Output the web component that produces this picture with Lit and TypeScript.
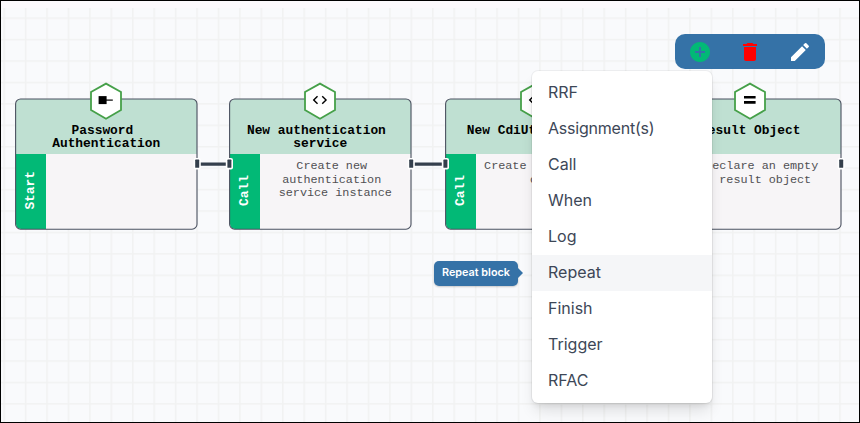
import { LitElement, html, svg, css } from "lit";
import { customElement, property } from "lit/decorators.js";
import { classMap } from "lit/directives/class-map.js";

type Glyph = "start" | "code" | "equal";

interface FlowNode {
  x: number;
  title: string;
  label: string;
  text: string;
  glyph: Glyph;
  input: boolean;
}

const NODES: FlowNode[] = [
  { x: 15, title: "Password \nAuthentication", label: "Start", text: "", glyph: "start", input: false },
  { x: 229, title: "New authentication \nservice", label: "Call", text: "Create new \nauthentication \nservice instance", glyph: "code", input: true },
  { x: 445, title: "New CdiUtil object", label: "Call", text: "Create new CdiUtil \nobject", glyph: "code", input: true },
  { x: 659, title: "Result Object", label: "Assign", text: "Declare an empty \nresult object", glyph: "equal", input: true },
];

const GLYPHS = {
  start: svg`<path d="M9.6 14.1h8v8h-8z"/><path d="M17 17.5h6.8v1.2H17z"/>`,
  code: svg`<path transform="translate(8.3 9.5) scale(.715)" d="M9.4 16.6 4.8 12l4.6-4.6L8 6l-6 6 6 6zm5.2 0 4.6-4.6-4.6-4.6L16 6l6 6-6 6z"/>`,
  equal: svg`<path d="M11 14h11.6v2.6H11zM11 19.1h11.6v2.6H11z"/>`,
};

const port = (cx: number) => svg`
  <rect x=${cx - 3.6} y="60" width="7.2" height="11.4" rx="2" fill="#fff"/>
  <rect x=${cx - 2} y="61.6" width="4" height="8.2" rx=".6" fill="#343f4c"/>
`;

@customElement("flow-node")
class FlowNodeElement extends LitElement {
  @property({ attribute: false }) node!: FlowNode;

  static styles = css`
    :host { display: block; font-family: "Liberation Mono", monospace; }
    .card {
      position: relative;
      box-sizing: border-box;
      width: 182.5px;
      height: 132px;
      padding: 1px;
      display: flex;
      flex-direction: column;
    }
    .head {
      flex: none;
      height: 54.5px;
      box-sizing: border-box;
      padding-top: 25px;
      background: #bfe0d2;
      border-radius: 5px 5px 0 0;
      text-align: center;
      white-space: pre;
      font-weight: 700;
      font-size: 12.86px;
      line-height: 13px;
      color: #000;
    }
    .body { flex: 1; display: flex; min-height: 0; background: #f7f5f7; border-radius: 0 0 5px 5px; }
    .side {
      flex: none;
      width: 30px;
      box-sizing: border-box;
      padding-bottom: 2px;
      background: #02b976;
      border-radius: 0 0 0 5px;
      display: flex;
      align-items: center;
      justify-content: center;
    }
    .label {
      writing-mode: vertical-rl;
      transform: rotate(180deg);
      color: #fff;
      font-weight: 700;
      font-size: 12.86px;
      line-height: 14px;
    }
    .text {
      flex: 1;
      padding-top: 6.5px;
      text-align: center;
      white-space: pre;
      font-size: 11.79px;
      line-height: 13.5px;
      color: #505053;
    }
    .frame { position: absolute; left: 0; top: 0; width: 183px; height: 132px; overflow: visible; }
    .hex { position: absolute; left: 74px; top: -16px; width: 34px; height: 38px; }
  `;

  render() {
    const n = this.node;
    return html`
      <div class="card">
        <div class="head">${n.title}</div>
        <div class="body">
          <div class="side"><span class="label">${n.label}</span></div>
          <div class="text">${n.text}</div>
        </div>
        <svg class="frame">
          <rect x=".6" y="1" width="181.4" height="130.2" rx="5" fill="none" stroke="#4a5160" stroke-width="1.1"/>
          ${n.input ? port(0.4) : null}
          ${port(182.2)}
        </svg>
        <svg class="hex" viewBox="0 0 34 38">
          <path d="M17 1.6 32 10v18L17 36.8 2 28V10z" fill="#fff" stroke="#46a049" stroke-width="1.8"/>
          ${GLYPHS[n.glyph]}
        </svg>
      </div>
    `;
  }
}

const ADD = "M12 2C6.48 2 2 6.48 2 12s4.48 10 10 10 10-4.48 10-10S17.52 2 12 2m5 11h-4v4h-2v-4H7v-2h4V7h2v4h4z";
const REMOVE = "M6 19c0 1.1.9 2 2 2h8c1.1 0 2-.9 2-2V7H6zM19 4h-3.5l-1-1h-5l-1 1H5v2h14z";
const EDIT = "M3 17.25V21h3.75L17.81 9.94l-3.75-3.75zM20.71 7.04c.39-.39.39-1.02 0-1.41l-2.34-2.34a.996.996 0 0 0-1.41 0l-1.83 1.83 3.75 3.75z";

const MENU = ["RRF", "Assignment(s)", "Call", "When", "Log", "Repeat", "Finish", "Trigger", "RFAC"];

@customElement("app-root")
class AppRoot extends LitElement {
  static styles = css`
    :host { display: block; }
    .canvas {
      position: relative;
      box-sizing: border-box;
      width: 860px;
      height: 423px;
      border: 1px solid #000;
      background: #fcfafd;
      overflow: hidden;
      padding-top: 7px;
    }
    .grid { display: block; width: 858px; height: 414px; }
    .node { position: absolute; top: 97px; }
    .toolbar {
      position: absolute;
      left: 674px;
      top: 33px;
      width: 150px;
      height: 35px;
      border-radius: 10px;
      background: #3572a7;
      display: flex;
      align-items: center;
      justify-content: space-around;
    }
    .tool { width: 24px; height: 24px; }
    .add { fill: #02b976; }
    .remove { fill: #f00; }
    .edit { fill: #fff; }
    .menu {
      position: absolute;
      left: 531px;
      top: 70px;
      width: 180px;
      box-sizing: border-box;
      padding: 4px 0;
      border-radius: 6px;
      background: #fff;
      box-shadow: 0 0 0 1px rgba(0, 0, 0, .05), 0 10px 15px -3px rgba(0, 0, 0, .12), 0 4px 6px -2px rgba(0, 0, 0, .08);
      font: 400 16px/34px Inter, sans-serif;
      color: #3d4757;
    }
    .item { height: 36px; padding-left: 16px; }
    .long { letter-spacing: -.22px; }
    .active { background: #f5f6f8; }
    .tip {
      position: absolute;
      left: 433px;
      top: 260px;
      width: 84px;
      height: 25px;
      border-radius: 5px;
      background: #3572a7;
      box-shadow: 0 1px 2px rgba(0, 0, 0, .2);
      color: #fff;
      font: 600 10.8px/23px Inter, sans-serif;
      text-align: center;
    }
    .tip::after {
      content: "";
      position: absolute;
      left: 84px;
      top: 7px;
      border: 5.5px solid transparent;
      border-left-color: #3572a7;
      border-right-width: 0;
    }
  `;

  render() {
    return html`
      <div class="canvas">
        <svg class="grid">
          <defs>
            <pattern id="cell" x="2.4" y="9.4" width="21.43" height="21.43" patternUnits="userSpaceOnUse">
              <path d="M.8 0v21.43M0 .8h21.43" stroke="#f1f2f2" stroke-width="1.5"/>
            </pattern>
          </defs>
          <rect width="858" height="414" fill="#f9fafc"/>
          <rect width="858" height="414" fill="url(#cell)"/>
          <path d="M196 156.1H229M410 156.1H444" stroke="#343f4c" stroke-width="3.4"/>
        </svg>
        ${NODES.map((n) => html`<flow-node class="node" style="left:${n.x - 1}px" .node=${n}></flow-node>`)}
        <div class="toolbar">
          <svg class="tool add" viewBox="0 0 24 24"><path d=${ADD}/></svg>
          <svg class="tool remove" viewBox="0 0 24 24"><path d=${REMOVE}/></svg>
          <svg class="tool edit" viewBox="0 0 24 24"><path d=${EDIT}/></svg>
        </div>
        <div class="menu">
          ${MENU.map((m) => html`<div class=${classMap({ item: true, long: m.length > 8, active: m === "Repeat" })}>${m}</div>`)}
        </div>
        <div class="tip">Repeat block</div>
      </div>
    `;
  }
}
